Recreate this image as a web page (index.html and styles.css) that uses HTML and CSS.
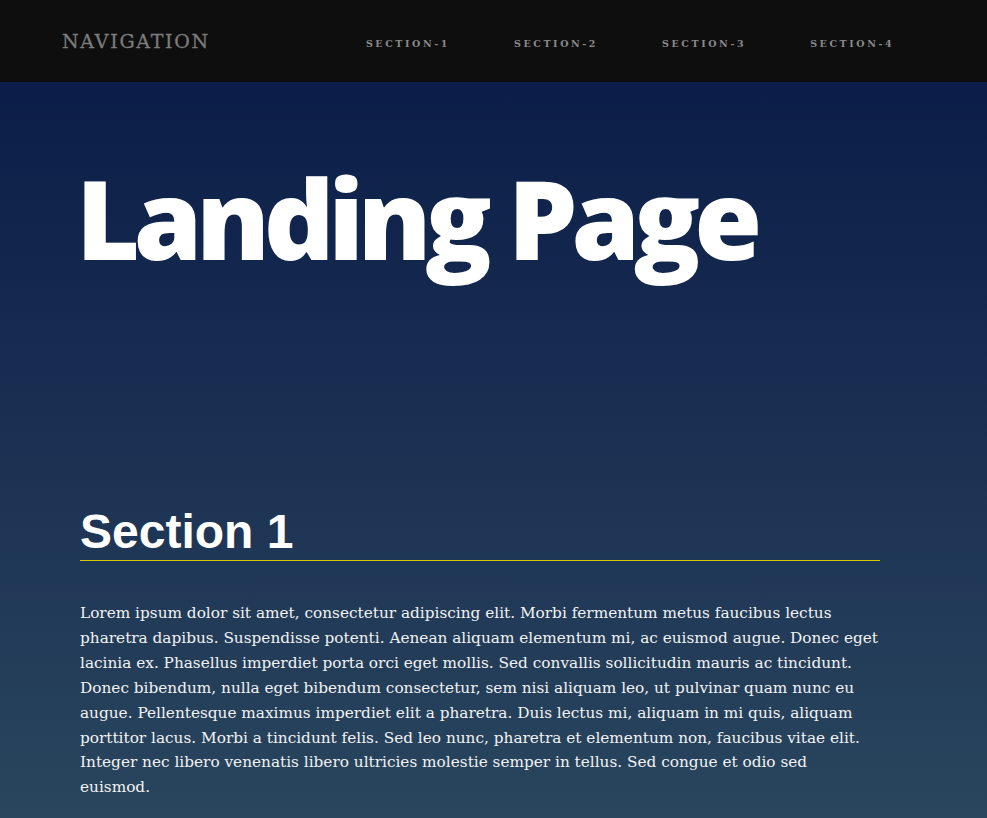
FILE: index.html
```html
<!DOCTYPE html>
<html>
<head>
<meta charset="utf-8">
<link rel="stylesheet" href="styles.css">
</head>
<body>
<nav class="nav">
  <div class="brand">NAVIGATION</div>
  <ul class="links">
    <li>SECTION-1</li>
    <li>SECTION-2</li>
    <li>SECTION-3</li>
    <li>SECTION-4</li>
  </ul>
</nav>
<main class="main">
  <h1 class="title">Landing Page</h1>
  <section class="section">
    <h2 class="section-title">Section 1</h2>
    <p class="text">Lorem ipsum dolor sit amet, consectetur adipiscing elit. Morbi fermentum metus faucibus lectus pharetra dapibus. Suspendisse potenti. Aenean aliquam elementum mi, ac euismod augue. Donec eget lacinia ex. Phasellus imperdiet porta orci eget mollis. Sed convallis sollicitudin mauris ac tincidunt. Donec bibendum, nulla eget bibendum consectetur, sem nisi aliquam leo, ut pulvinar quam nunc eu augue. Pellentesque maximus imperdiet elit a pharetra. Duis lectus mi, aliquam in mi quis, aliquam porttitor lacus. Morbi a tincidunt felis. Sed leo nunc, pharetra et elementum non, faucibus vitae elit. Integer nec libero venenatis libero ultricies molestie semper in tellus. Sed congue et odio sed euismod.</p>
  </section>
</main>
</body>
</html>
```
FILE: styles.css
```css
html, body {
  margin: 0;
  padding: 0;
  height: 100%;
}
body {
  background: linear-gradient(to bottom, #0b1d48 82px, #1e3555 520px, #29465e 818px);
  color: #fff;
  overflow: hidden;
}
.nav {
  height: 82px;
  background: #0e0e0e;
  display: flex;
  align-items: center;
  padding-left: 62px;
  box-sizing: border-box;
}
.brand {
  font-family: "DejaVu Serif", serif;
  font-size: 19px;
  letter-spacing: 1.7px;
  color: #7c7c7c;
  -webkit-text-stroke: 0.3px #7c7c7c;
  margin-top: -1px;
}
.links {
  list-style: none;
  margin: 4px 0 0 156px;
  padding: 0;
  display: flex;
  gap: 64px;
}
.links li {
  font-family: "DejaVu Serif", serif;
  font-weight: 700;
  font-size: 9.5px;
  letter-spacing: 2.6px;
  color: #8a8a8a;
}
.main {
  padding: 0 107px 0 80px;
}
.title {
  margin: 69px 0 0 -4px;
  font-family: "Open Sans", sans-serif;
  font-weight: 800;
  font-size: 110px;
  line-height: 132px;
  letter-spacing: -6.2px;
  color: #fff;
}
.section {
  margin-top: 225px;
}
.section-title {
  margin: 0;
  font-family: "Liberation Sans", Arial, sans-serif;
  font-weight: 700;
  font-size: 48px;
  line-height: 1;
  padding-bottom: 4px;
  border-bottom: 1px solid #d6c900;
}
.text {
  margin: 40px 0 0 0;
  font-family: "DejaVu Serif", serif;
  font-size: 15.3px;
  line-height: 24.9px;
  color: #f2f2f2;
}
```
